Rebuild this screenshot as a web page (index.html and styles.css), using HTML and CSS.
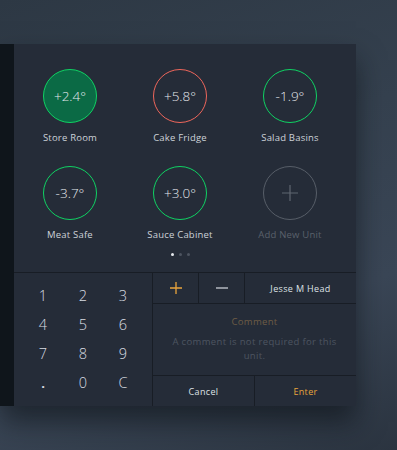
FILE: index.html
```html
<!doctype html>
<html lang="en">
<head>
    <meta charset="UTF-8">
    <meta name="viewport" content="width=device-width, initial-scale=1.0">
    <title>Temperature Log</title>
    <link rel="stylesheet" href="styles.css">
</head>
<body>
    <div class="screen">
        <div class="strip"></div>
        <div class="panel">
            <!-- Units -->
            <div class="top">
                <div class="units">
                    <div class="unit">
                        <div class="dial ok filled">+2.4°</div>
                        <span class="label">Store Room</span>
                    </div>
                    <div class="unit">
                        <div class="dial warn">+5.8°</div>
                        <span class="label">Cake Fridge</span>
                    </div>
                    <div class="unit">
                        <div class="dial ok">-1.9°</div>
                        <span class="label">Salad Basins</span>
                    </div>
                    <div class="unit">
                        <div class="dial ok">-3.7°</div>
                        <span class="label">Meat Safe</span>
                    </div>
                    <div class="unit">
                        <div class="dial ok">+3.0°</div>
                        <span class="label">Sauce Cabinet</span>
                    </div>
                    <div class="unit">
                        <div class="dial add">
                            <svg width="18" height="18" viewBox="0 0 18 18"><path d="M9 1v16M1 9h16" stroke="#5f6670" stroke-width="1.2" fill="none"/></svg>
                        </div>
                        <span class="label muted">Add New Unit</span>
                    </div>
                </div>
                <div class="dots">
                    <span class="dot active"></span>
                    <span class="dot"></span>
                    <span class="dot"></span>
                </div>
            </div>

            <!-- Entry -->
            <div class="entry">
                <div class="keypad">
                    <span class="key">1</span>
                    <span class="key">2</span>
                    <span class="key">3</span>
                    <span class="key">4</span>
                    <span class="key">5</span>
                    <span class="key">6</span>
                    <span class="key">7</span>
                    <span class="key">8</span>
                    <span class="key">9</span>
                    <span class="key dot-key">.</span>
                    <span class="key">0</span>
                    <span class="key">C</span>
                </div>
                <div class="side">
                    <div class="toolbar">
                        <button class="tool plus">
                            <svg width="12" height="12" viewBox="0 0 12 12"><path d="M6 0v12M0 6h12" stroke="#e9a43c" stroke-width="1.3" fill="none"/></svg>
                        </button>
                        <button class="tool minus">
                            <svg width="12" height="12" viewBox="0 0 12 12"><path d="M0 6h12" stroke="#c9ced6" stroke-width="1.3" fill="none"/></svg>
                        </button>
                        <div class="user">Jesse M Head</div>
                    </div>
                    <div class="comment">
                        <p class="comment-title">Comment</p>
                        <p class="comment-text">A comment is not required for this unit.</p>
                    </div>
                    <div class="actions">
                        <button class="action">Cancel</button>
                        <button class="action enter">Enter</button>
                    </div>
                </div>
            </div>
        </div>
    </div>
</body>
</html>
```

FILE: styles.css
```css
* {
    box-sizing: border-box;
}
body {
    margin: 0;
    width: 397px;
    height: 450px;
    overflow: hidden;
    font-family: "Open Sans", sans-serif;
    color: #d5d9df;
    background: linear-gradient(160deg, #2d3844 0%, #35414f 40%, #3a4656 70%, #2b3440 100%);
}
button {
    font-family: inherit;
    background: none;
    border: none;
    color: inherit;
    padding: 0;
    cursor: pointer;
}
.screen {
    display: flex;
    margin-top: 44px;
    height: 362px;
    width: 356px;
    box-shadow: 0 16px 26px rgba(12, 16, 22, 0.6);
}
.strip {
    width: 14px;
    background: #0f151b;
}
.panel {
    width: 342px;
    background: #252c38;
    display: flex;
    flex-direction: column;
}
.top {
    flex: 1;
}
.units {
    display: grid;
    grid-template-columns: repeat(3, 110px);
    row-gap: 22px;
    padding: 25px 0 0 1px;
}
.unit {
    display: flex;
    flex-direction: column;
    align-items: center;
    gap: 8px;
}
.dial {
    width: 54px;
    height: 54px;
    border-radius: 50%;
    border: 1.6px solid #0fd263;
    display: flex;
    align-items: center;
    justify-content: center;
    font-size: 13.5px;
    font-weight: 300;
    color: #e4e7eb;
}
.dial.filled {
    background: #0b6a45;
}
.dial.warn {
    border-color: #ee665b;
}
.dial.add {
    border: 1.2px solid #575e68;
}
.label {
    font-size: 9.5px;
    line-height: 13px;
    color: #cdd2d9;
    letter-spacing: 0.2px;
}
.label.muted {
    color: #5a616b;
}
.dots {
    display: flex;
    justify-content: center;
    gap: 5px;
    width: 330px;
    margin: 12px 0 0 1px;
}
.dot {
    width: 3px;
    height: 3px;
    border-radius: 50%;
    background: #4d5460;
}
.dot.active {
    background: #e6e9ed;
}
.entry {
    height: 134px;
    display: flex;
    border-top: 1px solid #181d25;
}
.keypad {
    width: 139px;
    border-right: 1px solid #181d25;
    display: grid;
    grid-template-columns: repeat(3, 40px);
    grid-auto-rows: 29px;
    padding: 8px 0 0 9px;
}
.key {
    display: flex;
    align-items: center;
    justify-content: center;
    font-size: 14.5px;
    font-weight: 300;
    color: #d8dce2;
    cursor: pointer;
}
.key.dot-key {
    font-weight: 700;
    font-size: 13px;
}
.side {
    flex: 1;
    display: flex;
    flex-direction: column;
}
.toolbar {
    display: flex;
    height: 31px;
    border-bottom: 1px solid #181d25;
}
.tool {
    width: 46px;
    border-right: 1px solid #181d25;
    display: flex;
    align-items: center;
    justify-content: center;
}
.user {
    flex: 1;
    display: flex;
    align-items: center;
    justify-content: center;
    font-size: 9px;
    color: #dde1e6;
    letter-spacing: 0.35px;
}
.comment {
    height: 72px;
    border-bottom: 1px solid #181d25;
    text-align: center;
    padding: 11px 12px 0;
}
.comment p {
    margin: 0;
}
.comment-title {
    font-size: 9.5px;
    line-height: 13px;
    color: #6e5c45;
    letter-spacing: 0.3px;
    margin-bottom: 7px !important;
}
.comment-text {
    font-size: 9.5px;
    line-height: 14px;
    color: #4d5561;
    letter-spacing: 0.35px;
}
.actions {
    flex: 1;
    display: flex;
}
.action {
    flex: 1;
    font-size: 9px;
    color: #dde1e6;
    letter-spacing: 0.35px;
}
.action + .action {
    border-left: 1px solid #181d25;
}
.action.enter {
    color: #e9a43c;
}
```
